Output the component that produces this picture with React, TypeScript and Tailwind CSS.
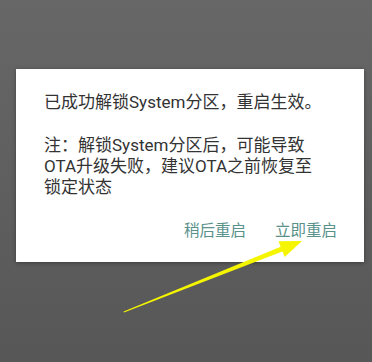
export default function App() {
  return (
    <div
      className="relative h-[362px] w-[372px] overflow-hidden bg-linear-to-b from-[#676767] to-[#575757] px-[16px] pt-[69px]"
      style={{ fontFamily: 'Roboto, "Noto Sans CJK SC", sans-serif' }}
    >
      {/* Dialog */}
      <div className="flex w-[348px] flex-col bg-white pt-[23px] pb-[21px] shadow-[0_1px_4px_rgba(0,0,0,0.35)]">
        <div className="px-[28px] text-[17px] leading-[21px] text-[#333333]">
          <p>已成功解锁System分区，重启生效。</p>
          <p className="mt-[22px]">
            注：解锁System分区后，可能导致
            <br />
            OTA升级失败，建议OTA之前恢复至
            <br />
            锁定状态
          </p>
        </div>
        <div className="mt-[23px] flex justify-end gap-[29px] pr-[27px] text-[15.5px] leading-[20px] text-[#5a918b]">
          <button>稍后重启</button>
          <button>立即重启</button>
        </div>
      </div>

      {/* Yellow annotation arrow */}
      <svg className="absolute top-0 left-0" width="372" height="362" viewBox="0 0 372 362">
        <polygon points="124,312.4 284.3,250.7 282.5,246.1 123.6,311.4" fill="#f5f500" />
        <polygon points="302,241 278.5,241.2 284.7,257" fill="#f5f500" />
      </svg>
    </div>
  )
}
